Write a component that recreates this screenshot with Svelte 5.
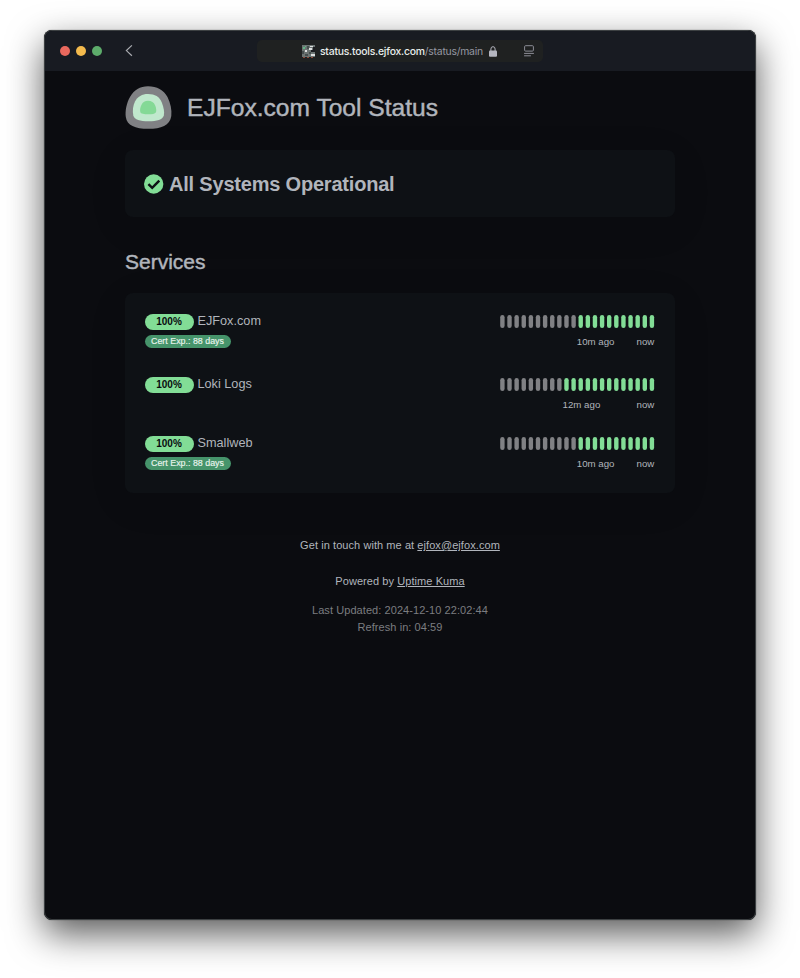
<script lang="ts">
  interface Service {
    name: string;
    uptime: string;
    cert?: string;
    empty: number;
    since: string;
  }

  const BEATS = 22;
  const PITCH = 7.12;

  const services: Service[] = [
    { name: "EJFox.com", uptime: "100%", cert: "Cert Exp.: 88 days", empty: 11, since: "10m ago" },
    { name: "Loki Logs", uptime: "100%", empty: 9, since: "12m ago" },
    { name: "Smallweb", uptime: "100%", cert: "Cert Exp.: 88 days", empty: 11, since: "10m ago" },
  ];

  const beats = Array.from({ length: BEATS }, (_, i) => i);
</script>

<div class="desktop">
  <div class="window">
    <header class="titlebar">
      <div class="lights">
        <span class="light red"></span>
        <span class="light yellow"></span>
        <span class="light green"></span>
      </div>
      <svg class="back" viewBox="0 0 8 12" width="8" height="12">
        <path d="M6.9 0.4 L1.4 5.6 L6.9 10.8" />
      </svg>
      <div class="address">
        <svg class="favicon" viewBox="0 0 13 13" width="13" height="13">
          <rect width="13" height="12" fill="#6c7472" />
          <path d="M5 1h2v3H5zM0 6h2v3H0zM7 7h2v2H7zM3 9h3v2H3z" fill="#454d4d" />
          <path d="M8 1h3v1H8zM7 3h3v2H7zM9 9h4v2H9zM3 5h2v2H3z" fill="#dcdede" />
          <path d="M11 2h2v5h-2zM9 5h2v2H9z" fill="#1b1c20" />
          <path d="M1 2h2v2H1zM3 1h1v1H3z" fill="#61b585" />
          <path d="M1 12h2v1H1zM5 12h2v1H5zM9 12h2v1H9z" fill="#8d4a3a" />
        </svg>
        <span class="url"><b>status.tools.ejfox.com</b>/status/main</span>
        <svg class="lock" viewBox="0 0 8 11" width="8" height="11">
          <path d="M1.9 5 V3 a2.1 2.3 0 0 1 4.2 0 V5" fill="none" stroke="#b4b5bf" stroke-width="1" />
          <rect x="0" y="4.6" width="8" height="6.2" rx="1" fill="#b4b5bf" />
        </svg>
        <svg class="reader" viewBox="0 0 10 12" width="10" height="12">
          <rect x="0.6" y="0.7" width="8.8" height="5.4" rx="1" />
          <path d="M0.1 8.4 H9.9 M0.1 10.8 H6.9" />
        </svg>
      </div>
    </header>

    <main class="page">
      <div class="heading">
        <svg class="logo" viewBox="0 0 47 43" width="47" height="43">
          <path
            d="M23 0.3 C32 0.3 38.5 4 42.5 11 C45.5 17 47 24 46.3 30 C45 39.5 36 42.8 23.5 42.8 C10 42.8 2 39.5 0.8 31 C0 25 1.5 17 5 11 C9 4 15 0.3 23 0.3 Z"
            fill="#808184"
          />
          <path
            d="M23 8 C30 8 34.5 10.8 36.8 16.5 C38.8 22 39.6 26 38.8 29.5 C37.5 34 32 35.2 23.5 35.2 C15 35.2 9.5 34 8.3 29.5 C7.3 25 8 19.5 10 15.5 C12.7 10.5 17 8 23 8 Z"
            fill="#c0e8cd"
          />
          <path
            d="M23 14.8 C26.5 14.8 28.9 16.3 30.2 19.5 C31.2 22 31.6 24.5 31 26.2 C30 28 27 28.2 23.3 28.2 C19 28.2 16 28 15.3 26 C14.8 24 15.3 21 16.4 19 C17.8 16.2 20 14.8 23 14.8 Z"
            fill="#84d996"
          />
        </svg>
        <h1>EJFox.com Tool Status</h1>
      </div>

      <section class="card overall">
        <svg class="check" viewBox="0 0 20 20" width="20" height="20">
          <circle cx="9.7" cy="10" r="9.7" fill="#82dd96" />
          <path d="M4.4 10.2 L8.2 13.8 L15.3 6.7" />
        </svg>
        <span>All Systems Operational</span>
      </section>

      <h2>Services</h2>

      <section class="card services">
        {#each services as service (service.name)}
          <div class="service">
            <div class="info">
              <div class="name-row">
                <span class="uptime">{service.uptime}</span>
                <span class="name">{service.name}</span>
              </div>
              {#if service.cert}
                <span class="cert">{service.cert}</span>
              {/if}
            </div>
            <div class="history">
              <svg class="beats" viewBox="0 0 155 13" width="155" height="13">
                {#each beats as i (i)}
                  <rect
                    class:empty={i < service.empty}
                    x={i * PITCH + 0.2}
                    y="0"
                    width="4.4"
                    height="13"
                    rx="2.2"
                  />
                {/each}
              </svg>
              <div class="range" style:padding-left="{service.empty * PITCH - 1.5}px">
                <span>{service.since}</span>
                <span>now</span>
              </div>
            </div>
          </div>
        {/each}
      </section>

      <footer>
        <p class="contact">Get in touch with me at <span class="link">ejfox@ejfox.com</span></p>
        <p class="powered">Powered by <span class="link">Uptime Kuma</span></p>
        <p class="refresh">Last Updated: 2024-12-10 22:02:44<br />Refresh in: 04:59</p>
      </footer>
    </main>
  </div>
</div>

<style>
  :global(body) {
    margin: 0;
    background: #fff;
  }
  .desktop {
    box-sizing: border-box;
    width: 800px;
    height: 978px;
    padding: 30px 44px 0;
    overflow: hidden;
    font-family: "Liberation Sans", Arial, sans-serif;
    color: #b1b5bc;
  }
  .window {
    height: 890px;
    border-radius: 8px;
    background: #0b0c10;
    overflow: hidden;
    box-shadow:
      inset 0 0 0 1px #3c4042,
      0 0 1px rgba(0, 0, 0, 0.8),
      0 14px 36px rgba(0, 0, 0, 0.65);
  }
  .titlebar {
    height: 40px;
    margin: 1px 1px 0;
    border-radius: 7px 7px 0 0;
    background: #181b22;
    display: flex;
    align-items: center;
  }
  .lights {
    display: flex;
    gap: 6px;
    margin-left: 14.5px;
  }
  .light {
    width: 10px;
    height: 10px;
    border-radius: 50%;
  }
  .red {
    background: #e9695e;
  }
  .yellow {
    background: #f3ba4d;
  }
  .green {
    background: #5dac6b;
  }
  .back {
    margin: 0 124.5px 0 23px;
    fill: none;
    stroke: #a9abb0;
    stroke-width: 1.2;
  }
  .address {
    box-sizing: border-box;
    width: 286px;
    height: 22px;
    padding: 0 9px 0 45px;
    border-radius: 5px;
    background: #1f2121;
    display: flex;
    align-items: center;
    font-family: Inter, sans-serif;
    font-size: 10.4px;
    letter-spacing: -0.23px;
    white-space: nowrap;
  }
  .url {
    width: 163px;
    margin-left: 5px;
    color: #9698a1;
  }
  .url b {
    font-weight: 500;
    color: #e9eeec;
  }
  .lock {
    margin-left: 6px;
  }
  .reader {
    margin-left: auto;
    fill: none;
    stroke: #8c8d96;
    stroke-width: 1;
  }
  .page {
    width: 550px;
    margin: 0 auto;
    padding-top: 15px;
  }
  .heading {
    height: 43px;
    display: flex;
    align-items: center;
    gap: 15px;
  }
  h1,
  h2 {
    margin: 0;
    font-weight: 400;
    white-space: nowrap;
    -webkit-text-stroke: 0.45px currentColor;
  }
  h1 {
    font-size: 24.6px;
    line-height: 43px;
  }
  h2 {
    margin: 32px 0 18px;
    font-size: 21px;
    line-height: 26px;
  }
  .card {
    box-sizing: border-box;
    border-radius: 8px;
    background: #0e1115;
    box-shadow: 0 9px 42px rgba(0, 0, 0, 0.08);
  }
  .overall {
    height: 67px;
    margin-top: 21px;
    padding-left: 19px;
    display: flex;
    align-items: center;
    gap: 5px;
    font-size: 20px;
    font-weight: 700;
    letter-spacing: -0.2px;
  }
  .overall span {
    padding-top: 2px;
  }
  .check path {
    fill: none;
    stroke: #0e1115;
    stroke-width: 2.5;
  }
  .services {
    height: 200px;
    padding: 20px 20px 0 19.5px;
  }
  .service {
    display: flex;
    justify-content: space-between;
    height: 63px;
  }
  .service + .service {
    height: 59px;
  }
  .name-row {
    display: flex;
    gap: 4px;
  }
  .uptime {
    width: 49px;
    height: 16px;
    margin-top: 1px;
    border-radius: 8px;
    background: #82dd96;
    color: #090b0f;
    font-size: 10px;
    font-weight: 700;
    line-height: 16px;
    text-align: center;
  }
  .name {
    font-size: 12.7px;
    line-height: 16px;
  }
  .cert {
    display: block;
    width: 86px;
    height: 13px;
    margin-top: 5px;
    border-radius: 7px;
    background: #46946b;
    color: #e9f4ed;
    font-size: 8.9px;
    line-height: 13px;
    text-align: center;
    white-space: nowrap;
    -webkit-text-stroke: 0.15px currentColor;
  }
  .history {
    width: 155px;
  }
  .beats {
    display: block;
    margin-top: 2px;
    fill: #82dd96;
  }
  .beats .empty {
    fill: #808184;
  }
  .range {
    display: flex;
    justify-content: space-between;
    margin-top: 7px;
    padding-right: 0.7px;
    font-size: 9.7px;
    line-height: 13px;
    white-space: nowrap;
  }
  footer {
    padding-top: 44px;
    font-size: 11px;
    line-height: 17px;
    letter-spacing: 0.07px;
    text-align: center;
  }
  footer p {
    margin: 0;
  }
  .link {
    text-decoration: underline;
  }
  .powered {
    margin-top: 19px;
  }
  .refresh {
    margin-top: 12px;
    color: #7b7d80;
  }
</style>
